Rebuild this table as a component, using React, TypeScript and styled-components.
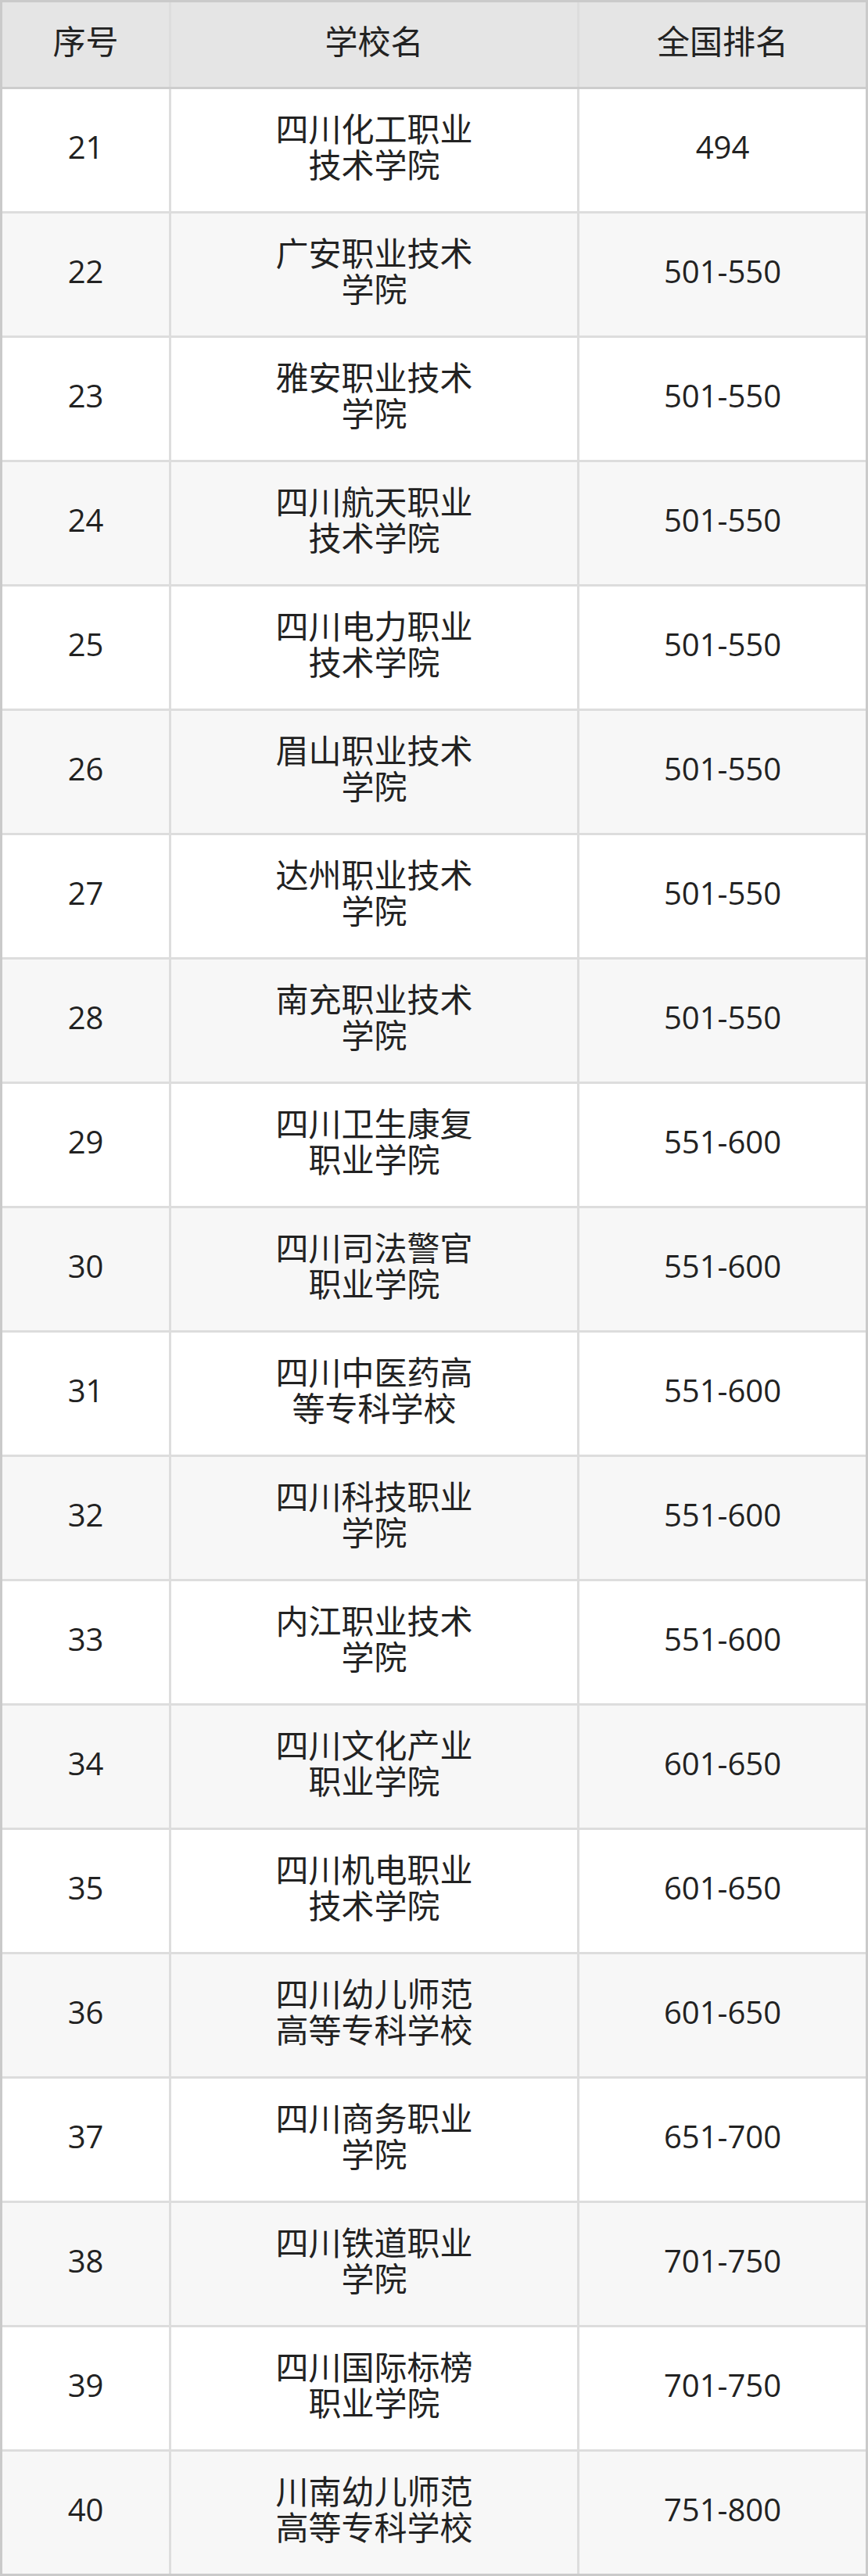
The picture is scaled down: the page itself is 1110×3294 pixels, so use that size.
import styled, { createGlobalStyle } from "styled-components";

const GlobalStyle = createGlobalStyle`
  html, body {
    margin: 0;
    padding: 0;
    background: #ffffff;
  }
  body {
    font-family: "Open Sans", "Noto Sans CJK SC", sans-serif;
    color: #222222;
  }
`;

const rows = [
  { no: 21, name: "四川化工职业技术学院", rank: "494" },
  { no: 22, name: "广安职业技术学院", rank: "501-550" },
  { no: 23, name: "雅安职业技术学院", rank: "501-550" },
  { no: 24, name: "四川航天职业技术学院", rank: "501-550" },
  { no: 25, name: "四川电力职业技术学院", rank: "501-550" },
  { no: 26, name: "眉山职业技术学院", rank: "501-550" },
  { no: 27, name: "达州职业技术学院", rank: "501-550" },
  { no: 28, name: "南充职业技术学院", rank: "501-550" },
  { no: 29, name: "四川卫生康复职业学院", rank: "551-600" },
  { no: 30, name: "四川司法警官职业学院", rank: "551-600" },
  { no: 31, name: "四川中医药高等专科学校", rank: "551-600" },
  { no: 32, name: "四川科技职业学院", rank: "551-600" },
  { no: 33, name: "内江职业技术学院", rank: "551-600" },
  { no: 34, name: "四川文化产业职业学院", rank: "601-650" },
  { no: 35, name: "四川机电职业技术学院", rank: "601-650" },
  { no: 36, name: "四川幼儿师范高等专科学校", rank: "601-650" },
  { no: 37, name: "四川商务职业学院", rank: "651-700" },
  { no: 38, name: "四川铁道职业学院", rank: "701-750" },
  { no: 39, name: "四川国际标榜职业学院", rank: "701-750" },
  { no: 40, name: "川南幼儿师范高等专科学校", rank: "751-800" },
];

const Table = styled.div`
  width: 1110px;
  box-sizing: border-box;
  border: 3px solid #cacaca;
  display: flex;
  flex-direction: column;
  gap: 3px;
  background: #dddddd;
`;

const Row = styled.div`
  display: grid;
  grid-template-columns: 213px 519px 366px;
  column-gap: 3px;
  background: #dddddd;
`;

const HeadRow = styled(Row)`
  box-shadow: 0 3px 0 #cdcdcd;
  position: relative;
  z-index: 1;
`;

const Cell = styled.div<{ $bg: string; $h: number; $cjk?: boolean }>`
  box-sizing: border-box;
  height: ${(p) => p.$h}px;
  padding-bottom: 8px;
  background: ${(p) => p.$bg};
  display: flex;
  align-items: center;
  justify-content: center;
  text-align: center;
  font-size: ${(p) => (p.$cjk ? 42 : 40)}px;
  line-height: 46px;
  color: #222222;
`;

const Name = styled.span`
  display: block;
  max-width: 266px;
  word-break: break-all;
`;

export default function App() {
  return (
    <>
      <GlobalStyle />
      <Table>
        <HeadRow>
          <Cell $bg="#e5e5e5" $h={108} $cjk>序号</Cell>
          <Cell $bg="#e5e5e5" $h={108} $cjk>学校名</Cell>
          <Cell $bg="#e5e5e5" $h={108} $cjk>全国排名</Cell>
        </HeadRow>
        {rows.map((r, i) => {
          const bg = i % 2 === 1 ? "#f7f7f7" : "#ffffff";
          return (
            <Row key={r.no}>
              <Cell $bg={bg} $h={156}>{r.no}</Cell>
              <Cell $bg={bg} $h={156} $cjk>
                <Name>{r.name}</Name>
              </Cell>
              <Cell $bg={bg} $h={156}>{r.rank}</Cell>
            </Row>
          );
        })}
      </Table>
    </>
  );
}
